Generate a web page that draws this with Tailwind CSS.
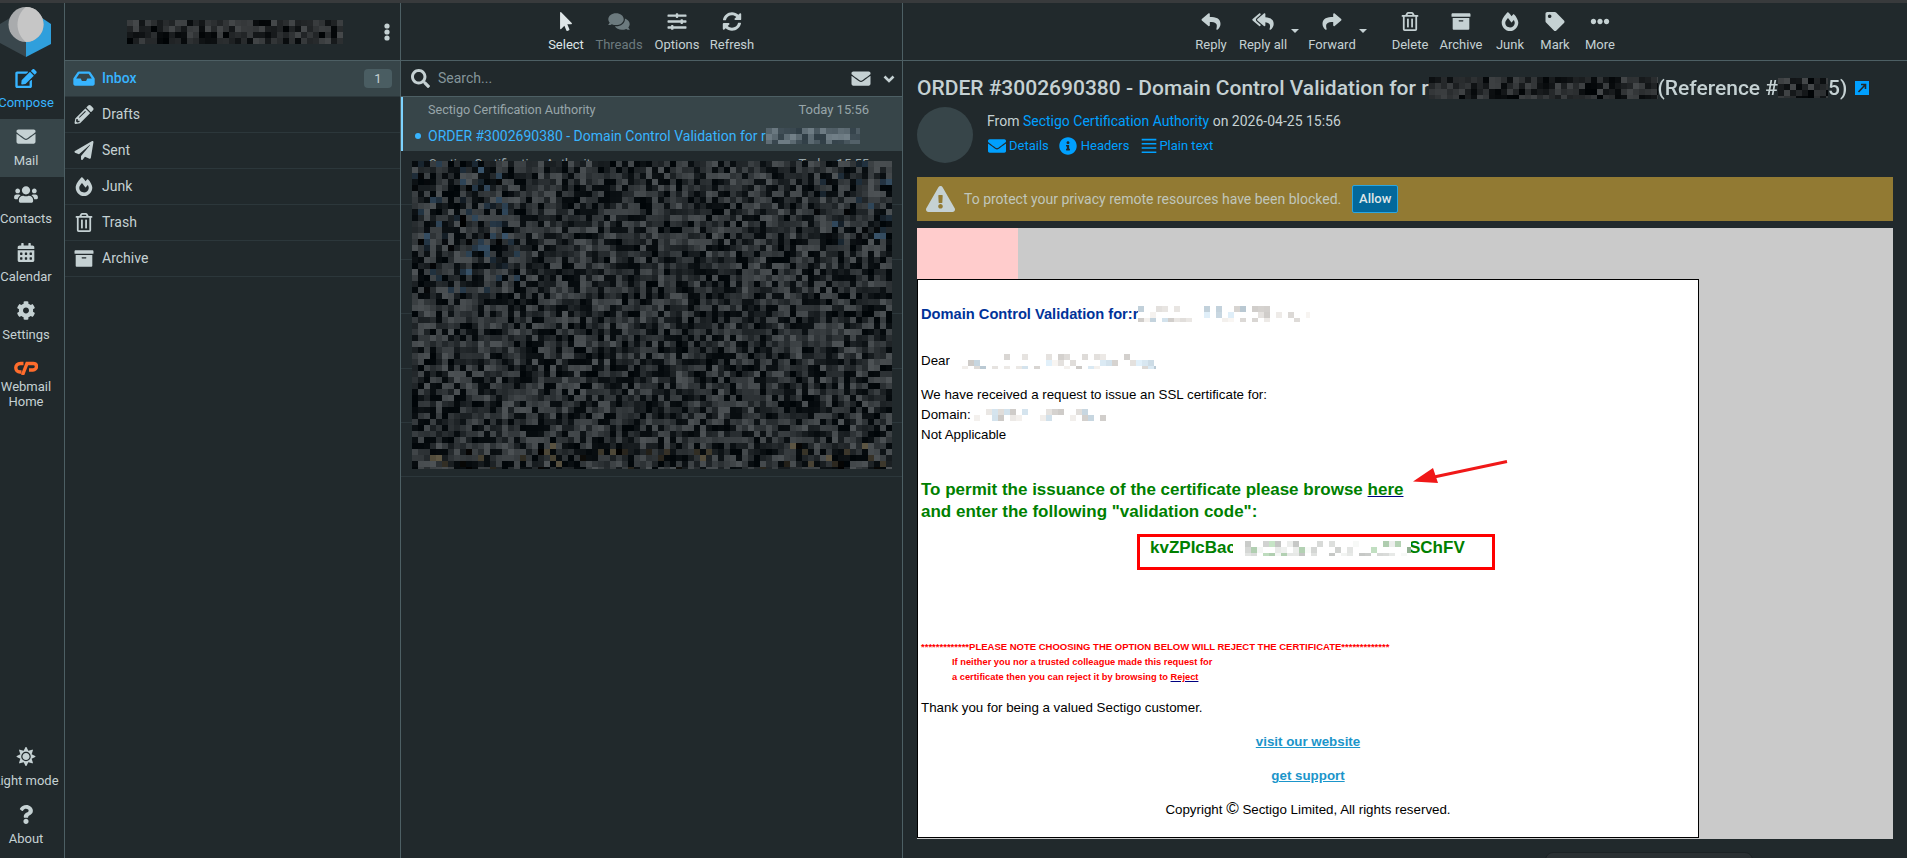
<!DOCTYPE html>
<html lang="en">
<head>
    <meta charset="UTF-8">
    <title>Roundcube Webmail</title>
    <script src="https://cdn.jsdelivr.net/npm/@tailwindcss/browser@4"></script>
</head>
<body class="w-[1907px] h-[858px] overflow-hidden bg-[#21292c] text-[#c5d1d3] [font-family:Roboto,sans-serif]">
    <!-- icon sprite -->
    <svg class="hidden" xmlns="http://www.w3.org/2000/svg">
        <symbol id="i-edit" viewBox="0 0 576 512"><path d="M402.6 83.2l90.2 90.2c3.8 3.8 3.8 10 0 13.8L274.4 405.6l-92.8 10.3c-12.4 1.4-22.9-9.1-21.5-21.5l10.3-92.8L388.8 83.2c3.8-3.8 10-3.8 13.8 0zm162-22.9l-48.8-48.8c-15.2-15.2-39.9-15.2-55.2 0l-35.4 35.4c-3.8 3.8-3.8 10 0 13.8l90.2 90.2c3.8 3.8 10 3.8 13.8 0l35.4-35.4c15.2-15.3 15.2-40 0-55.2zM384 346.2V448H64V128h229.8c3.2 0 6.2-1.3 8.5-3.5l40-40c7.6-7.6 2.2-20.5-8.5-20.5H48C21.5 64 0 85.5 0 112v352c0 26.5 21.5 48 48 48h352c26.5 0 48-21.5 48-48V306.2c0-10.7-12.9-16-20.5-8.5l-40 40c-2.2 2.3-3.5 5.3-3.5 8.5z"/></symbol>
        <symbol id="i-mail" viewBox="0 0 512 512"><path d="M502.3 190.8c3.9-3.1 9.7-.2 9.7 4.7V400c0 26.5-21.5 48-48 48H48c-26.5 0-48-21.5-48-48V195.6c0-5 5.7-7.8 9.7-4.7 22.4 17.4 52.1 39.5 154.1 113.6 21.1 15.4 56.7 47.8 92.2 47.6 35.7.3 72-32.8 92.3-47.6 102-74.1 131.6-96.3 154-113.7zM256 320c23.2.4 56.6-29.2 73.4-41.4 132.7-96.3 142.8-104.7 173.4-128.7 5.8-4.5 9.2-11.5 9.2-18.9v-19c0-26.5-21.5-48-48-48H48C21.5 64 0 85.5 0 112v19c0 7.4 3.4 14.3 9.2 18.9 30.6 23.9 40.7 32.4 173.4 128.7 16.8 12.2 50.2 41.8 73.4 41.4z"/></symbol>
        <symbol id="i-users" viewBox="0 0 640 512"><path d="M96 224c35.3 0 64-28.7 64-64s-28.7-64-64-64-64 28.7-64 64 28.7 64 64 64zm448 0c35.3 0 64-28.7 64-64s-28.7-64-64-64-64 28.7-64 64 28.7 64 64 64zm32 32h-64c-17.6 0-33.5 7.1-45.1 18.6 40.3 22.1 68.9 62 75.1 109.4h66c17.7 0 32-14.3 32-32v-32c0-35.3-28.7-64-64-64zm-256 0c61.9 0 112-50.1 112-112S381.9 32 320 32 208 82.1 208 144s50.1 112 112 112zm76.8 32h-8.3c-20.8 10-43.9 16-68.5 16s-47.6-6-68.5-16h-8.3C179.6 288 128 339.6 128 403.2V432c0 26.5 21.5 48 48 48h288c26.5 0 48-21.5 48-48v-28.8c0-63.6-51.6-115.2-115.2-115.2zm-223.7-13.4C161.5 263.1 145.6 256 128 256H64c-35.3 0-64 28.7-64 64v32c0 17.7 14.3 32 32 32h65.9c6.3-47.4 34.9-87.3 75.2-109.4z"/></symbol>
        <symbol id="i-calendar" viewBox="0 0 448 512"><path d="M0 464c0 26.5 21.5 48 48 48h352c26.5 0 48-21.5 48-48V192H0v272zm320-196c0-6.6 5.4-12 12-12h40c6.6 0 12 5.4 12 12v40c0 6.6-5.4 12-12 12h-40c-6.6 0-12-5.4-12-12v-40zm0 128c0-6.6 5.4-12 12-12h40c6.6 0 12 5.4 12 12v40c0 6.6-5.4 12-12 12h-40c-6.6 0-12-5.4-12-12v-40zM192 268c0-6.6 5.4-12 12-12h40c6.6 0 12 5.4 12 12v40c0 6.6-5.4 12-12 12h-40c-6.6 0-12-5.4-12-12v-40zm0 128c0-6.6 5.4-12 12-12h40c6.6 0 12 5.4 12 12v40c0 6.6-5.4 12-12 12h-40c-6.6 0-12-5.4-12-12v-40zM64 268c0-6.6 5.4-12 12-12h40c6.6 0 12 5.4 12 12v40c0 6.6-5.4 12-12 12H76c-6.6 0-12-5.4-12-12v-40zm0 128c0-6.6 5.4-12 12-12h40c6.6 0 12 5.4 12 12v40c0 6.6-5.4 12-12 12H76c-6.6 0-12-5.4-12-12v-40zM400 64h-48V16c0-8.8-7.2-16-16-16h-32c-8.8 0-16 7.2-16 16v48H160V16c0-8.8-7.2-16-16-16h-32c-8.8 0-16 7.2-16 16v48H48C21.5 64 0 85.5 0 112v48h448v-48c0-26.5-21.5-48-48-48z"/></symbol>
        <symbol id="i-cog" viewBox="0 0 512 512"><path d="M487.4 315.7l-42.6-24.6c4.3-23.2 4.3-47 0-70.2l42.6-24.6c4.9-2.8 7.1-8.6 5.5-14-11.1-35.6-30-67.8-54.7-94.6-3.8-4.1-10-5.1-14.8-2.3L380.8 110c-17.9-15.4-38.5-27.3-60.8-35.1V25.8c0-5.6-3.9-10.5-9.4-11.7-36.7-8.2-74.3-7.8-109.2 0-5.5 1.2-9.4 6.1-9.4 11.7V75c-22.2 7.9-42.8 19.8-60.8 35.1L88.7 85.5c-4.9-2.8-11-1.9-14.8 2.3-24.7 26.7-43.6 58.9-54.7 94.6-1.7 5.4.6 11.2 5.5 14L67.3 221c-4.3 23.2-4.3 47 0 70.2l-42.6 24.6c-4.9 2.8-7.1 8.6-5.5 14 11.1 35.6 30 67.8 54.7 94.6 3.8 4.1 10 5.1 14.8 2.3l42.6-24.6c17.9 15.4 38.5 27.3 60.8 35.1v49.2c0 5.6 3.9 10.5 9.4 11.7 36.7 8.2 74.3 7.8 109.2 0 5.5-1.2 9.4-6.1 9.4-11.7v-49.2c22.2-7.9 42.8-19.8 60.8-35.1l42.6 24.6c4.9 2.8 11 1.9 14.8-2.3 24.7-26.7 43.6-58.9 54.7-94.6 1.5-5.5-.7-11.3-5.6-14.1zM256 336c-44.1 0-80-35.9-80-80s35.9-80 80-80 80 35.9 80 80-35.9 80-80 80z"/></symbol>
        <symbol id="i-sun" viewBox="0 0 512 512"><path d="M256 160c-52.9 0-96 43.1-96 96s43.1 96 96 96 96-43.1 96-96-43.1-96-96-96zm246.4 80.5l-94.7-47.3 33.5-100.4c4.5-13.6-8.4-26.5-21.9-21.9l-100.4 33.5-47.4-94.8c-6.4-12.8-24.6-12.8-31 0l-47.3 94.7L92.7 70.8c-13.6-4.5-26.5 8.4-21.9 21.9l33.5 100.4-94.7 47.4c-12.8 6.4-12.8 24.6 0 31l94.7 47.3-33.5 100.5c-4.5 13.6 8.4 26.5 21.9 21.9l100.4-33.5 47.3 94.7c6.4 12.8 24.6 12.8 31 0l47.3-94.7 100.4 33.5c13.6 4.5 26.5-8.4 21.9-21.9l-33.5-100.4 94.7-47.3c13-6.5 13-24.7.2-31.1zm-155.9 106c-49.9 49.9-131.1 49.9-181 0-49.9-49.9-49.9-131.1 0-181 49.9-49.9 131.1-49.9 181 0 49.9 49.9 49.9 131.1 0 181z"/></symbol>
        <symbol id="i-question" viewBox="0 0 384 512"><path d="M202.021 0C122.202 0 70.503 32.703 29.914 91.026c-7.363 10.58-5.093 25.086 5.178 32.874l43.138 32.709c10.373 7.865 25.132 6.026 33.253-4.148 25.049-31.381 43.63-49.449 82.757-49.449 30.764 0 68.816 19.799 68.816 49.631 0 22.552-18.617 34.134-48.993 51.164-35.423 19.86-82.299 44.576-82.299 106.405V320c0 13.255 10.745 24 24 24h72.471c13.255 0 24-10.745 24-24v-5.773c0-42.86 125.268-44.645 125.268-160.627C377.504 66.256 286.902 0 202.021 0zM192 373.459c-38.196 0-69.271 31.075-69.271 69.271 0 38.195 31.075 69.27 69.271 69.27s69.271-31.075 69.271-69.271-31.075-69.27-69.271-69.27z"/></symbol>
        <symbol id="i-inbox" viewBox="0 0 576 512"><path d="M567.938 243.908L462.25 85.374A48.003 48.003 0 0 0 422.311 64H153.689a48 48 0 0 0-39.938 21.374L8.062 243.908A47.994 47.994 0 0 0 0 270.533V400c0 26.51 21.49 48 48 48h480c26.51 0 48-21.49 48-48V270.533a47.994 47.994 0 0 0-8.062-26.625zM162.252 128h251.497l85.333 128H376l-32 64H232l-32-64H76.918l85.334-128z"/></symbol>
        <symbol id="i-pencil" viewBox="0 0 512 512"><path d="M497.9 142.1l-46.1 46.1c-4.7 4.7-12.3 4.7-17 0l-111-111c-4.7-4.7-4.7-12.3 0-17l46.1-46.1c18.7-18.7 49.1-18.7 67.9 0l60.1 60.1c18.8 18.7 18.8 49.1 0 67.9zM284.2 99.8L21.6 362.4.4 483.9c-2.9 16.4 11.4 30.6 27.8 27.8l121.5-21.3 262.6-262.6c4.7-4.7 4.7-12.3 0-17l-111-111c-4.8-4.7-12.4-4.7-17.1 0zM124.1 339.9c-5.5-5.5-5.5-14.3 0-19.8l154-154c5.5-5.5 14.3-5.5 19.8 0s5.5 14.3 0 19.8l-154 154c-5.5 5.5-14.3 5.5-19.8 0zM88 424h48v36.3l-64.5 11.3-31.1-31.1L51.7 376H88v48z"/></symbol>
        <symbol id="i-plane" viewBox="0 0 512 512"><path d="M476 3.2L12.5 270.6c-18.1 10.4-15.8 35.6 2.2 43.2L121 358.4l287.3-253.2c5.5-4.9 13.3 2.6 8.6 8.3L176 407v80.5c0 23.6 28.5 32.9 42.5 15.8L282 426l124.6 52.2c14.2 6 30.4-2.9 33-18.2l72-432C515 7.8 493.3-6.8 476 3.2z"/></symbol>
        <symbol id="i-fire" viewBox="0 0 448 512"><path d="M323.56 51.2c-20.8 19.3-39.58 39.59-56.22 59.97C240.08 73.62 206.28 35.53 168 0 69.74 91.17 0 209.96 0 281.6 0 408.85 100.29 512 224 512s224-103.15 224-230.4c0-53.27-51.98-163.14-124.44-230.4zm-19.47 340.65C282.43 407.01 255.72 416 226.86 416 154.71 416 96 368.26 96 290.75c0-38.61 24.31-72.63 72.79-130.75 6.93 7.98 98.83 125.34 98.83 125.34l58.63-66.88c4.14 6.85 7.91 13.55 11.27 19.97 27.35 52.19 15.81 118.97-33.43 153.42z"/></symbol>
        <symbol id="i-trash" viewBox="0 0 448 512"><path d="M268 416h24a12 12 0 0 0 12-12V188a12 12 0 0 0-12-12h-24a12 12 0 0 0-12 12v216a12 12 0 0 0 12 12zM432 80h-82.41l-34-56.7A48 48 0 0 0 274.41 0H173.59a48 48 0 0 0-41.16 23.3L98.41 80H16A16 16 0 0 0 0 96v16a16 16 0 0 0 16 16h16v336a48 48 0 0 0 48 48h288a48 48 0 0 0 48-48V128h16a16 16 0 0 0 16-16V96a16 16 0 0 0-16-16zM171.84 50.91A6 6 0 0 1 177 48h94a6 6 0 0 1 5.15 2.91L293.61 80H154.39zM368 464H80V128h288zm-212-48h24a12 12 0 0 0 12-12V188a12 12 0 0 0-12-12h-24a12 12 0 0 0-12 12v216a12 12 0 0 0 12 12z"/></symbol>
        <symbol id="i-archive" viewBox="0 0 512 512"><path d="M32 448c0 17.7 14.3 32 32 32h384c17.7 0 32-14.3 32-32V160H32v288zm160-212c0-6.6 5.4-12 12-12h104c6.6 0 12 5.4 12 12v8c0 6.6-5.4 12-12 12H204c-6.6 0-12-5.4-12-12v-8zM480 32H32C14.3 32 0 46.3 0 64v48c0 8.8 7.2 16 16 16h480c8.8 0 16-7.2 16-16V64c0-17.7-14.3-32-32-32z"/></symbol>
        <symbol id="i-pointer" viewBox="0 0 320 512"><path d="M302.189 329.126H196.105l55.831 135.993c3.889 9.428-.555 19.999-9.444 23.999l-49.165 21.427c-9.165 4-19.443-.571-23.332-9.714l-53.053-129.136-86.664 89.138C18.729 472.71 0 463.554 0 447.977V18.299C0 1.899 19.921-6.096 30.277 5.443l284.412 292.542c11.472 11.179 3.007 31.141-12.5 31.141z"/></symbol>
        <symbol id="i-comments" viewBox="0 0 576 512"><path d="M416 192c0-88.4-93.1-160-208-160S0 103.6 0 192c0 34.3 14.1 65.9 38 92-13.4 30.2-35.5 54.2-35.8 54.5-2.2 2.3-2.8 5.7-1.5 8.7S4.8 352 8 352c36.6 0 66.9-12.3 88.7-25 32.2 15.7 70.3 25 111.3 25 114.9 0 208-71.6 208-160zm122 220c23.9-26 38-57.7 38-92 0-66.9-53.5-124.2-129.3-148.1.9 6.6 1.3 13.3 1.3 20.1 0 105.9-107.7 192-240 192-10.8 0-21.3-.8-31.7-1.9C207.8 439.6 281.8 480 368 480c41 0 79.1-9.2 111.3-25 21.8 12.7 52.1 25 88.7 25 3.2 0 6.1-1.9 7.3-4.8 1.3-2.9.7-6.3-1.5-8.7-.3-.3-22.4-24.2-35.8-54.5z"/></symbol>
        <symbol id="i-sliders" viewBox="0 0 512 512"><path d="M496 384H160v-16c0-8.8-7.2-16-16-16h-32c-8.8 0-16 7.2-16 16v16H16c-8.8 0-16 7.2-16 16v32c0 8.8 7.2 16 16 16h80v16c0 8.8 7.2 16 16 16h32c8.8 0 16-7.2 16-16v-16h336c8.8 0 16-7.2 16-16v-32c0-8.8-7.2-16-16-16zm0-160h-80v-16c0-8.8-7.2-16-16-16h-32c-8.8 0-16 7.2-16 16v16H16c-8.8 0-16 7.2-16 16v32c0 8.8 7.2 16 16 16h336v16c0 8.8 7.2 16 16 16h32c8.8 0 16-7.2 16-16v-16h80c8.8 0 16-7.2 16-16v-32c0-8.8-7.2-16-16-16zm0-160H288V48c0-8.8-7.2-16-16-16h-32c-8.8 0-16 7.2-16 16v16H16C7.2 64 0 71.2 0 80v32c0 8.8 7.2 16 16 16h208v16c0 8.8 7.2 16 16 16h32c8.8 0 16-7.2 16-16v-16h208c8.8 0 16-7.2 16-16V80c0-8.8-7.2-16-16-16z"/></symbol>
        <symbol id="i-sync" viewBox="0 0 512 512"><path d="M370.72 133.28C339.458 104.008 298.888 87.962 255.848 88c-77.458.068-144.328 53.178-162.791 126.85-1.344 5.363-6.122 9.15-11.651 9.15H24.103c-7.498 0-13.194-6.807-11.807-14.176C33.933 94.924 134.813 8 256 8c66.448 0 126.791 26.136 171.315 68.685L463.03 40.97C478.149 25.851 504 36.559 504 57.941V192c0 13.255-10.745 24-24 24H345.941c-21.382 0-32.09-25.851-16.971-40.971l41.75-41.749zM32 296h134.059c21.382 0 32.09 25.851 16.971 40.971l-41.75 41.75c31.262 29.273 71.835 45.319 114.876 45.28 77.418-.07 144.315-53.144 162.787-126.849 1.344-5.363 6.122-9.15 11.651-9.15h57.304c7.498 0 13.194 6.807 11.807 14.176C478.067 417.076 377.187 504 256 504c-66.448 0-126.791-26.136-171.315-68.685L48.97 471.03C33.851 486.149 8 475.441 8 454.059V320c0-13.255 10.745-24 24-24z"/></symbol>
        <symbol id="i-search" viewBox="0 0 512 512"><path d="M505 442.7L405.3 343c-4.5-4.5-10.6-7-17-7H372c27.6-35.3 44-79.7 44-128C416 93.1 322.9 0 208 0S0 93.1 0 208s93.1 208 208 208c48.3 0 92.7-16.4 128-44v16.3c0 6.4 2.5 12.5 7 17l99.7 99.7c9.4 9.4 24.6 9.4 33.9 0l28.3-28.3c9.4-9.4 9.4-24.6.1-34zM208 336c-70.7 0-128-57.2-128-128 0-70.7 57.2-128 128-128 70.7 0 128 57.2 128 128 0 70.7-57.2 128-128 128z"/></symbol>
        <symbol id="i-reply" viewBox="0 0 512 512"><path d="M8.309 189.836L184.313 37.851C199.719 24.546 224 35.347 224 56.015v80.053c160.629 1.839 288 34.032 288 186.258 0 61.441-39.581 122.309-83.333 154.132-13.653 9.931-33.111-2.533-28.077-18.631 45.344-145.012-21.507-183.51-176.59-185.742V360c0 20.7-24.3 31.453-39.687 18.164l-176.004-152c-11.071-9.562-11.086-26.753 0-36.328z"/></symbol>
        <symbol id="i-reply-all" viewBox="0 0 576 512"><path d="M136.309 189.836L312.313 37.851C327.72 24.546 352 35.348 352 56.015v82.763c129.182 10.231 224 52.212 224 183.548 0 61.441-39.582 122.309-83.333 154.132-13.653 9.931-33.111-2.533-28.077-18.631 38.512-123.162-3.922-169.482-112.59-182.015v84.175c0 20.701-24.3 31.453-39.687 18.164L136.309 226.164c-11.071-9.561-11.086-26.753 0-36.328zm-128 36.328L184.313 378.15C199.7 391.439 224 380.687 224 359.986v-15.818l-108.606-93.785A55.96 55.96 0 0 1 96 207.998a55.953 55.953 0 0 1 19.393-42.38L224 71.832V56.015c0-20.667-24.28-31.469-39.687-18.164L8.309 189.836c-11.086 9.575-11.071 26.767 0 36.328z"/></symbol>
        <symbol id="i-share" viewBox="0 0 512 512"><path d="M503.691 189.836L327.687 37.851C312.281 24.546 288 35.347 288 56.015v80.053C127.371 137.907 0 170.1 0 322.326c0 61.441 39.581 122.309 83.333 154.132 13.653 9.931 33.111-2.533 28.077-18.631C66.066 312.814 132.917 274.316 288 272.085V360c0 20.7 24.3 31.453 39.687 18.164l176.004-152c11.071-9.562 11.086-26.753 0-36.328z"/></symbol>
        <symbol id="i-tag" viewBox="0 0 512 512"><path d="M0 252.118V48C0 21.49 21.49 0 48 0h204.118a48 48 0 0 1 33.941 14.059l211.882 211.882c18.745 18.745 18.745 49.137 0 67.882L293.823 497.941c-18.745 18.745-49.137 18.745-67.882 0L14.059 286.059A48 48 0 0 1 0 252.118zM112 64c-26.51 0-48 21.49-48 48s21.49 48 48 48 48-21.49 48-48-21.49-48-48-48z"/></symbol>
        <symbol id="i-dots" viewBox="0 0 512 512"><path d="M328 256c0 39.8-32.2 72-72 72s-72-32.2-72-72 32.2-72 72-72 72 32.2 72 72zm104-72c-39.8 0-72 32.2-72 72s32.2 72 72 72 72-32.2 72-72-32.2-72-72-72zm-352 0c-39.8 0-72 32.2-72 72s32.2 72 72 72 72-32.2 72-72-32.2-72-72-72z"/></symbol>
        <symbol id="i-info" viewBox="0 0 512 512"><path d="M256 8C119.043 8 8 119.083 8 256c0 136.997 111.043 248 248 248s248-111.003 248-248C504 119.083 392.957 8 256 8zm0 110c23.196 0 42 18.804 42 42s-18.804 42-42 42-42-18.804-42-42 18.804-42 42-42zm56 254c0 6.627-5.373 12-12 12h-88c-6.627 0-12-5.373-12-12v-24c0-6.627 5.373-12 12-12h12v-64h-12c-6.627 0-12-5.373-12-12v-24c0-6.627 5.373-12 12-12h64c6.627 0 12 5.373 12 12v100h12c6.627 0 12 5.373 12 12v24z"/></symbol>
        <symbol id="i-lines" viewBox="0 0 448 512"><path d="M16 52h416v44H16zM16 172h416v44H16zM16 292h416v44H16zM16 412h416v44H16z"/></symbol>
        <symbol id="i-warn" viewBox="0 0 576 512"><path d="M569.517 440.013C587.975 472.007 564.806 512 527.94 512H48.054c-36.937 0-59.999-40.055-41.577-71.987L246.423 24c18.467-32.009 64.72-31.951 83.154 0l239.94 416.013zM288 354c-25.405 0-46 20.595-46 46s20.595 46 46 46 46-20.595 46-46-20.595-46-46-46zm-43.673-165.346l7.418 136c.347 6.364 5.609 11.346 11.982 11.346h48.546c6.373 0 11.635-4.982 11.982-11.346l7.418-136c.375-6.874-5.098-12.654-11.982-12.654h-63.383c-6.884 0-12.356 5.78-11.981 12.654z"/></symbol>
    </svg>

    <div class="h-[3px] bg-[#383a3c]"></div>

    <div class="flex h-[855px]">
        <!-- Rail -->
        <nav class="w-[65px] shrink-0 border-r border-[#4d5f64] flex flex-col justify-between text-[13px] leading-[15px] overflow-hidden">
            <div>
                <div class="h-[58px]">
                    <svg class="block" width="52" height="58" viewBox="0 3 52 58">
                        <polygon points="10,18 0,24 0,43 26,57 26,41" fill="#3a474d"/>
                        <polygon points="42,18 51,24 51,44 26,57 26,41" fill="#2f9fdc"/>
                        <circle cx="26" cy="24.500" r="17.500" fill="#a9abad"/>
                        <path d="M26 7a17.500 17.500 0 0 1 0 35c-5-4-8.500-10-8.500-17.500s3.500-13.500 8.500-17.500z" fill="#c6c6c6"/>
                    </svg>
                </div>
                <a class="h-[58px] block text-[#37b4ff]"><span class="w-[52px] flex flex-col items-center pt-2"><svg class="h-[19px] w-7 fill-current"><use href="#i-edit"/></svg><span class="mt-[7px] whitespace-nowrap">Compose</span></span></a>
                <a class="h-[58px] block bg-[#374549]"><span class="w-[52px] flex flex-col items-center pt-2"><svg class="h-[19px] w-7 fill-current"><use href="#i-mail"/></svg><span class="mt-[7px] whitespace-nowrap">Mail</span></span></a>
                <a class="h-[58px] block"><span class="w-[52px] flex flex-col items-center pt-2"><svg class="h-[19px] w-7 fill-current"><use href="#i-users"/></svg><span class="mt-[7px] whitespace-nowrap">Contacts</span></span></a>
                <a class="h-[58px] block"><span class="w-[52px] flex flex-col items-center pt-2"><svg class="h-[19px] w-7 fill-current"><use href="#i-calendar"/></svg><span class="mt-[7px] whitespace-nowrap">Calendar</span></span></a>
                <a class="h-[58px] block"><span class="w-[52px] flex flex-col items-center pt-2"><svg class="h-[19px] w-7 fill-current"><use href="#i-cog"/></svg><span class="mt-[7px] whitespace-nowrap">Settings</span></span></a>
                <a class="h-[66px] block"><span class="w-[52px] flex flex-col items-center pt-[10px]"><svg class="h-[14px] w-6 text-[#ff6c2c]" viewBox="0 0 24 14" fill="none" stroke="currentColor" stroke-width="3.400"><path d="M9.500 2.500H6.500C3.500 2.500 1.800 4.500 1.800 6.800S3.500 11 6 11h1.500"/><path d="M8.500 14L13 2.500h6.200c2 0 3.300 1.300 3.300 3s-1.500 3.500-3.500 3.500H15"/></svg><span class="mt-[5px] text-center leading-[14.500px]">Webmail Home</span></span></a>
            </div>
            <div class="pb-[3px]">
                <a class="h-[58px] block"><span class="w-[52px] flex flex-col items-center pt-2"><svg class="h-[19px] w-7 fill-current"><use href="#i-sun"/></svg><span class="mt-[7px] whitespace-nowrap">Light mode</span></span></a>
                <a class="h-[58px] block"><span class="w-[52px] flex flex-col items-center pt-2"><svg class="h-[19px] w-7 fill-current"><use href="#i-question"/></svg><span class="mt-[7px] whitespace-nowrap">About</span></span></a>
            </div>
        </nav>

        <!-- Folders -->
        <aside class="w-[336px] shrink-0 border-r border-[#4d5f64]">
            <header class="h-[58px] border-b border-[#4d5f64] flex items-center pl-[62px] pr-[10px] justify-between">
                <canvas class="mosaic" data-w="216" data-h="24" data-kind="dark" data-seed="11"></canvas>
                <svg class="w-[6px] h-[18px] text-[#c5d1d3] fill-current" viewBox="0 0 6 18"><circle cx="3" cy="3" r="2.600"/><circle cx="3" cy="9" r="2.600"/><circle cx="3" cy="15" r="2.600"/></svg>
            </header>
            <ul class="text-[14px]">
                <li class="h-9 flex items-center bg-[#374549] text-[#37b4ff] font-medium border-b border-[#2c373b] pl-[7px]">
                    <svg class="h-[19px] w-6 fill-current mr-[6px]"><use href="#i-inbox"/></svg>Inbox
                    <span class="ml-auto mr-2 w-7 h-[19px] rounded bg-[#4a5d62] text-[#c5d1d3] font-normal text-[13px] flex items-center justify-center">1</span>
                </li>
                <li class="h-9 flex items-center border-b border-[#2c373b] pl-[7px]"><svg class="h-[19px] w-6 fill-current mr-[6px]"><use href="#i-pencil"/></svg>Drafts</li>
                <li class="h-9 flex items-center border-b border-[#2c373b] pl-[7px]"><svg class="h-[19px] w-6 fill-current mr-[6px]"><use href="#i-plane"/></svg>Sent</li>
                <li class="h-9 flex items-center border-b border-[#2c373b] pl-[7px]"><svg class="h-[19px] w-6 fill-current mr-[6px]"><use href="#i-fire"/></svg>Junk</li>
                <li class="h-9 flex items-center border-b border-[#2c373b] pl-[7px]"><svg class="h-[19px] w-6 fill-current mr-[6px]"><use href="#i-trash"/></svg>Trash</li>
                <li class="h-9 flex items-center border-b border-[#2c373b] pl-[7px]"><svg class="h-[19px] w-6 fill-current mr-[6px]"><use href="#i-archive"/></svg>Archive</li>
            </ul>
        </aside>

        <!-- Message list -->
        <section class="w-[502px] shrink-0 border-r border-[#4d5f64] relative">
            <header class="h-[58px] border-b border-[#4d5f64] flex pl-[141px] pt-[9px] text-[13px] leading-[15px]">
                <a class="w-12 flex flex-col items-center text-[#dfe6e8]"><svg class="h-[19px] w-7 fill-current"><use href="#i-pointer"/></svg><span class="mt-[6px]">Select</span></a>
                <a class="w-[52px] ml-[3px] flex flex-col items-center text-[#6c7a7e]"><svg class="h-[19px] w-7 fill-current"><use href="#i-comments"/></svg><span class="mt-[6px]">Threads</span></a>
                <a class="w-[52px] ml-[6px] flex flex-col items-center"><svg class="h-[19px] w-7 fill-current"><use href="#i-sliders"/></svg><span class="mt-[6px]">Options</span></a>
                <a class="w-[52px] ml-[3px] flex flex-col items-center"><svg class="h-[19px] w-7 fill-current"><use href="#i-sync"/></svg><span class="mt-[6px]">Refresh</span></a>
            </header>
            <div class="h-9 border-b border-[#4d5f64] flex items-center pl-[10px] pr-[7px] text-[14px]">
                <svg class="h-[19px] w-[19px] fill-current"><use href="#i-search"/></svg>
                <span class="ml-2 text-[#84959a]">Search...</span>
                <svg class="h-[19px] w-[20px] fill-current ml-auto"><use href="#i-mail"/></svg>
                <svg class="w-3 h-2 ml-3 fill-none stroke-current" stroke-width="2.600" viewBox="0 0 12 8"><path d="M1.500 1.500L6 6l4.500-4.500"/></svg>
            </div>
            <ul>
                <li class="h-[54px] bg-[#374549] border-l-2 border-[#7dd3ff] relative">
                    <div class="flex justify-between pl-[25px] pr-[33px] pt-[3px] text-[12.600px] leading-5 text-[#97a5a9]"><span>Sectigo Certification Authority</span><span class="text-[13px]">Today 15:56</span></div>
                    <div class="flex items-center pl-[25px] mt-[6px] text-[14px] leading-5 text-[#37b4ff]">
                        <span class="absolute left-[12px] w-[6px] h-[6px] rounded-full bg-[#37b4ff]"></span>
                        <span class="whitespace-nowrap">ORDER #3002690380 - Domain Control Validation for r</span><canvas class="mosaic" data-w="94" data-h="16" data-kind="mid" data-seed="29"></canvas>
                    </div>
                </li>
                <li class="h-[54.400px] border-b border-[#2c373b]">
                    <div class="flex justify-between pl-7 pr-[33px] pt-[3px] text-[12.600px] leading-5 text-[#97a5a9]"><span>Sectigo Certification Authority</span><span class="text-[13px]">Today 15:55</span></div>
                </li>
                <li class="h-[54.400px] border-b border-[#2c373b]"></li>
                <li class="h-[54.400px] border-b border-[#2c373b]"></li>
                <li class="h-[54.400px] border-b border-[#2c373b]"></li>
                <li class="h-[54.400px] border-b border-[#2c373b]"></li>
                <li class="h-[54.400px] border-b border-[#2c373b]"></li>
            </ul>
            <canvas class="mosaic absolute left-[11px] top-[158px]" data-w="480" data-h="308" data-kind="list" data-seed="7"></canvas>
        </section>

        <!-- Message -->
        <main class="flex-1 min-w-0 relative">
            <header class="h-[58px] border-b border-[#4d5f64] flex pl-[284px] pt-[9px] text-[13px] leading-[15px]">
                <a class="w-12 flex flex-col items-center"><svg class="h-[19px] w-7 fill-current"><use href="#i-reply"/></svg><span class="mt-[6px]">Reply</span></a>
                <a class="w-14 flex flex-col items-center relative"><svg class="h-[19px] w-7 fill-current"><use href="#i-reply-all"/></svg><span class="mt-[6px] whitespace-nowrap">Reply all</span><span class="absolute -right-2 top-[17px] border-x-4 border-t-4 border-x-transparent border-t-[#c5d1d3]"></span></a>
                <a class="w-[70px] ml-[6px] flex flex-col items-center relative"><svg class="h-[19px] w-7 fill-current"><use href="#i-share"/></svg><span class="mt-[6px]">Forward</span><span class="absolute right-0 top-[17px] border-x-4 border-t-4 border-x-transparent border-t-[#c5d1d3]"></span></a>
                <a class="w-11 ml-[21px] flex flex-col items-center"><svg class="h-[19px] w-7 fill-current"><use href="#i-trash"/></svg><span class="mt-[6px]">Delete</span></a>
                <a class="w-12 ml-[5px] flex flex-col items-center"><svg class="h-[19px] w-7 fill-current"><use href="#i-archive"/></svg><span class="mt-[6px]">Archive</span></a>
                <a class="w-10 ml-[5px] flex flex-col items-center"><svg class="h-[19px] w-7 fill-current"><use href="#i-fire"/></svg><span class="mt-[6px]">Junk</span></a>
                <a class="w-10 ml-[5px] flex flex-col items-center"><svg class="h-[19px] w-7 fill-current"><use href="#i-tag"/></svg><span class="mt-[6px]">Mark</span></a>
                <a class="w-10 ml-[5px] flex flex-col items-center"><svg class="h-[19px] w-7 fill-current"><use href="#i-dots"/></svg><span class="mt-[6px]">More</span></a>
            </header>

            <div class="pl-[14px] pr-[14px]">
                <h1 class="mt-[15px] h-6 flex items-center text-[21px] leading-6 font-medium whitespace-nowrap">
                    <span>ORDER #3002690380 - Domain Control Validation for r</span><canvas class="mosaic" data-w="229" data-h="22" data-kind="dark" data-seed="43"></canvas><span>(Reference #</span><canvas class="mosaic" data-w="50" data-h="20" data-kind="dark" data-seed="51"></canvas><span>5)</span>
                    <svg class="ml-[8px] w-[14px] h-[14px]" viewBox="0 0 14 14"><rect width="14" height="14" fill="#00a0ff"/><path d="M3.500 11L10 4M6 3.500h4.500V8" stroke="#21292c" stroke-width="1.600" fill="none"/></svg>
                </h1>
                <div class="flex mt-[7px]">
                    <div class="w-14 h-14 rounded-full bg-[#374549] shrink-0"></div>
                    <div class="ml-[14px] leading-5">
                        <p class="mt-[4px] text-[14px]">From <a class="text-[#00a0ff]">Sectigo Certification Authority</a> on 2026-04-25 15:56</p>
                        <p class="mt-[5px] flex items-center text-[13px] text-[#00a0ff]">
                            <svg class="w-[18px] h-[18px] fill-current ml-[1px]"><use href="#i-mail"/></svg><span class="ml-[3px]">Details</span>
                            <svg class="w-[18px] h-[18px] fill-current ml-[10px]"><use href="#i-info"/></svg><span class="ml-[4px]">Headers</span>
                            <svg class="w-4 h-[18px] fill-current ml-[12px]"><use href="#i-lines"/></svg><span class="ml-[2px]">Plain text</span>
                        </p>
                    </div>
                </div>
                <div class="mt-[14px] h-11 bg-[#927a33] flex items-center pl-[9px] text-[14px] text-[#c0c6bb]">
                    <svg class="h-[26px] w-[29px] text-[#c5d1d3] fill-current"><use href="#i-warn"/></svg>
                    <span class="ml-[9px]">To protect your privacy remote resources have been blocked.</span>
                    <button class="ml-[11px] w-[46px] h-7 bg-[#03689b] border border-[#2ba6e0] rounded-[2px] text-[#dfe6e8] text-[13px] font-medium">Allow</button>
                </div>

                <!-- Email frame -->
                <div class="mt-[7px] h-[611px] bg-[#cacaca] [font-family:'Liberation_Sans',Arial,sans-serif] text-black">
                    <div class="w-[101px] h-[51px] bg-[#ffcccc]"></div>
                    <div class="w-[782px] h-[559px] bg-white border border-black text-[13.330px] leading-5 relative">
                        <div class="pl-[3px]">
                            <p class="mt-[24px] flex items-center text-[14.670px] font-bold text-[#003399]">Domain Control Validation for:r<canvas class="mosaic" data-w="172" data-h="16" data-kind="pale" data-seed="61"></canvas></p>
                            <p class="mt-[27px] flex items-center">Dear<canvas class="mosaic" data-w="206" data-h="15" data-kind="pale" data-seed="67"></canvas></p>
                            <p class="mt-[14px]">We have received a request to issue an SSL certificate for:</p>
                            <p class="flex items-center leading-[19.500px]">Domain:<canvas class="mosaic ml-[3px]" data-w="138" data-h="12" data-kind="pale" data-seed="71"></canvas></p>
                            <p class="leading-[19.500px]">Not Applicable</p>
                            <div class="mt-[35px] text-[17px] leading-[21.500px] font-bold text-[#008000]">
                                <p>To permit the issuance of the certificate please browse <a class="underline decoration-[#000080]">here</a></p>
                                <p>and enter the following "validation code":</p>
                            </div>
                        </div>
                        <div class="mt-[12px] ml-[219px] w-[358px] h-9 border-[3px] border-[#ff0000] flex items-center pl-[10px] text-[17px] font-bold text-[#008000] pb-[8px]">kvZPIcBac<canvas class="mosaic relative z-10 -ml-[3px] -mr-[2px]" data-w="178" data-h="15" data-kind="palegreen" data-seed="83"></canvas>SChFV</div>
                        <div class="pl-[3px] text-[#ff0000] text-[9.500px] leading-[14px] font-bold">
                            <p class="mt-[70px] whitespace-nowrap">*************PLEASE NOTE CHOOSING THE OPTION BELOW WILL REJECT THE CERTIFICATE*************</p>
                            <p class="pl-[31px] mt-[1px] text-[9.300px]">If neither you nor a trusted colleague made this request for</p>
                            <p class="pl-[31px] mt-[1px] text-[9.300px]">a certificate then you can reject it by browsing to <a class="underline decoration-[#000080]">Reject</a></p>
                        </div>
                        <p class="pl-[3px] mt-[14px]">Thank you for being a valued Sectigo customer.</p>
                        <p class="mt-[14px] text-center font-bold text-[#1b95ca] underline">visit our website</p>
                        <p class="mt-[14px] text-center font-bold text-[#1b95ca] underline">get support</p>
                        <p class="mt-[14px] text-center">Copyright <span class="text-[17px] leading-none">©</span> Sectigo Limited, All rights reserved.</p>
                        <!-- annotation arrow drawn on the screenshot -->
                        <svg class="absolute left-[494px] top-[180px]" width="100" height="26" viewBox="0 0 100 26">
                            <path d="M95 1.500L22 17" stroke="#f01818" stroke-width="3"/>
                            <polygon points="1,21.500 21,8 26,23" fill="#f01818"/>
                        </svg>
                    </div>
                </div>
            </div>
            <div class="absolute left-[642px] top-[849px] w-[208px] h-[12px] rounded-t-lg bg-[#2a3033] border border-[#1c2225]"></div>
        </main>
    </div>

    <script>
        // pixelated (redacted) regions, filled with a seeded noise so the render is stable
        const kinds = {
            dark: () => { const v = rnd() * 70; return [v, v + 3, v + 5]; },
            mid: () => { const v = 45 + rnd() * 70; return [v, v + 14, v + 22]; },
            list: (x, y) => {
                const v = rnd() < 0.3 ? rnd() * 14 : 22 + rnd() * 56;
                const left = x < 18 && y < 22, right = x > 66 && y < 14;
                if ((left || right) && rnd() < 0.2) return [v * 0.75, v * 1.1, v * 1.4];
                if (y > 46 && rnd() < 0.1) return [v * 1.25, v * 1.15, v * 0.9];
                return [v, v + 5, v + 8];
            },
            pale: () => {
                const r = rnd();
                if (r < 0.6) return [255, 255, 255];
                const v = 205 + rnd() * 45;
                return r > 0.9 ? [v - 20, v - 5, v + 5] : [v, v - 3, v - 6];
            },
            palegreen: () => {
                const r = rnd();
                if (r < 0.55) return [255, 255, 255];
                const v = 195 + rnd() * 55;
                return r > 0.85 ? [v - 50, v - 20, v - 50] : [v, v + 2, v];
            }
        };
        let state = 1;
        function rnd() {
            state = (state + 0x6D2B79F5) | 0;
            let t = Math.imul(state ^ (state >>> 15), 1 | state);
            t = (t + Math.imul(t ^ (t >>> 7), 61 | t)) ^ t;
            return ((t ^ (t >>> 14)) >>> 0) / 4294967296;
        }
        document.querySelectorAll('.mosaic').forEach(c => {
            const w = +c.dataset.w, h = +c.dataset.h;
            c.width = w;
            c.height = h;
            state = +c.dataset.seed * 7919 + 1;
            const ctx = c.getContext('2d');
            const pick = kinds[c.dataset.kind];
            for (let y = 0; y * 6 < h; y++) {
                for (let x = 0; x * 6 < w; x++) {
                    const [r, g, b] = pick(x, y);
                    ctx.fillStyle = `rgb(${r | 0},${g | 0},${b | 0})`;
                    ctx.fillRect(x * 6, y * 6, 6, 6);
                }
            }
        });
    </script>
</body>
</html>
